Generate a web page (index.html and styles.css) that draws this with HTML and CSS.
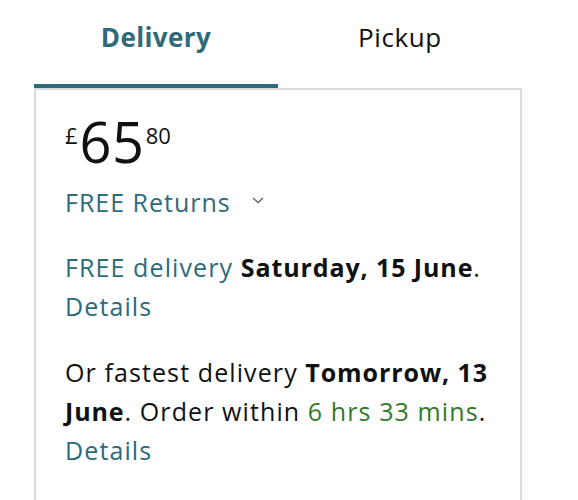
FILE: index.html
```html
<!DOCTYPE html>
<html lang="en">
<head>
<meta charset="utf-8">
<title>Delivery</title>
<link rel="stylesheet" href="styles.css">
</head>
<body>
<div class="panel">
  <div class="tabs">
    <div class="tab tab-active">Delivery</div>
    <div class="tab">Pickup</div>
  </div>
  <div class="box">
    <div class="price">
      <span class="price-sym">£</span><span class="price-whole">65</span><span class="price-frac">80</span>
    </div>
    <div class="returns">
      <span class="link">FREE Returns</span>
      <svg class="chev" width="12" height="7" viewBox="0 0 12 7"><path d="M1 1 L6 5.5 L11 1" fill="none" stroke="#666" stroke-width="1.4"/></svg>
    </div>
    <p class="msg"><span class="link">FREE delivery</span> <b>Saturday, 15 June</b>. <span class="link">Details</span></p>
    <p class="msg">Or fastest delivery <b>Tomorrow, 13 June</b>. Order within <span class="green">6 hrs 33 mins</span>. <span class="link">Details</span></p>
  </div>
</div>
</body>
</html>
```
FILE: styles.css
```css
html, body {
  margin: 0;
  padding: 0;
  background: #fff;
}
body {
  font-family: "Open Sans", "Noto Sans", sans-serif;
  color: #0f1111;
}
.panel {
  width: 488px;
  margin-left: 34px;
}
.tabs {
  display: flex;
}
.tab {
  flex: 1;
  height: 88px;
  text-align: center;
  font-size: 26px;
  line-height: 38px;
  padding-top: 18px;
  box-sizing: border-box;
  color: #0f1111;
  letter-spacing: 0.6px;
}
.tab-active {
  color: #2d6a7b;
  font-weight: 700;
  letter-spacing: 0.4px;
  border-bottom: 4px solid #2d6a7b;
}
.box {
  border: 2px solid #dcdcdc;
  padding: 23px 30px 40px 29px;
  min-height: 420px;
}
.price {
  display: flex;
  align-items: flex-start;
  height: 56px;
}
.price-sym, .price-frac {
  font-size: 22px;
  line-height: 22px;
  margin-top: 11px;
}
.price-sym {
  margin-right: 2px;
}
.price-whole {
  font-size: 56px;
  line-height: 56px;
  margin-right: 1px;
  letter-spacing: 0.5px;
}
.returns {
  margin-top: 14px;
  font-size: 25px;
  line-height: 39px;
  letter-spacing: 1px;
  display: flex;
  align-items: center;
}
.chev {
  margin-left: 21px;
  margin-top: -4px;
}
.link {
  color: #2d6a7b;
}
.green {
  color: #2f7a2b;
}
.msg {
  margin: 26px 0 0;
  font-size: 25px;
  line-height: 39px;
  letter-spacing: 1.1px;
}
.msg + .msg {
  margin-top: 27px;
}
b {
  font-weight: 700;
  letter-spacing: 0.9px;
}
```
